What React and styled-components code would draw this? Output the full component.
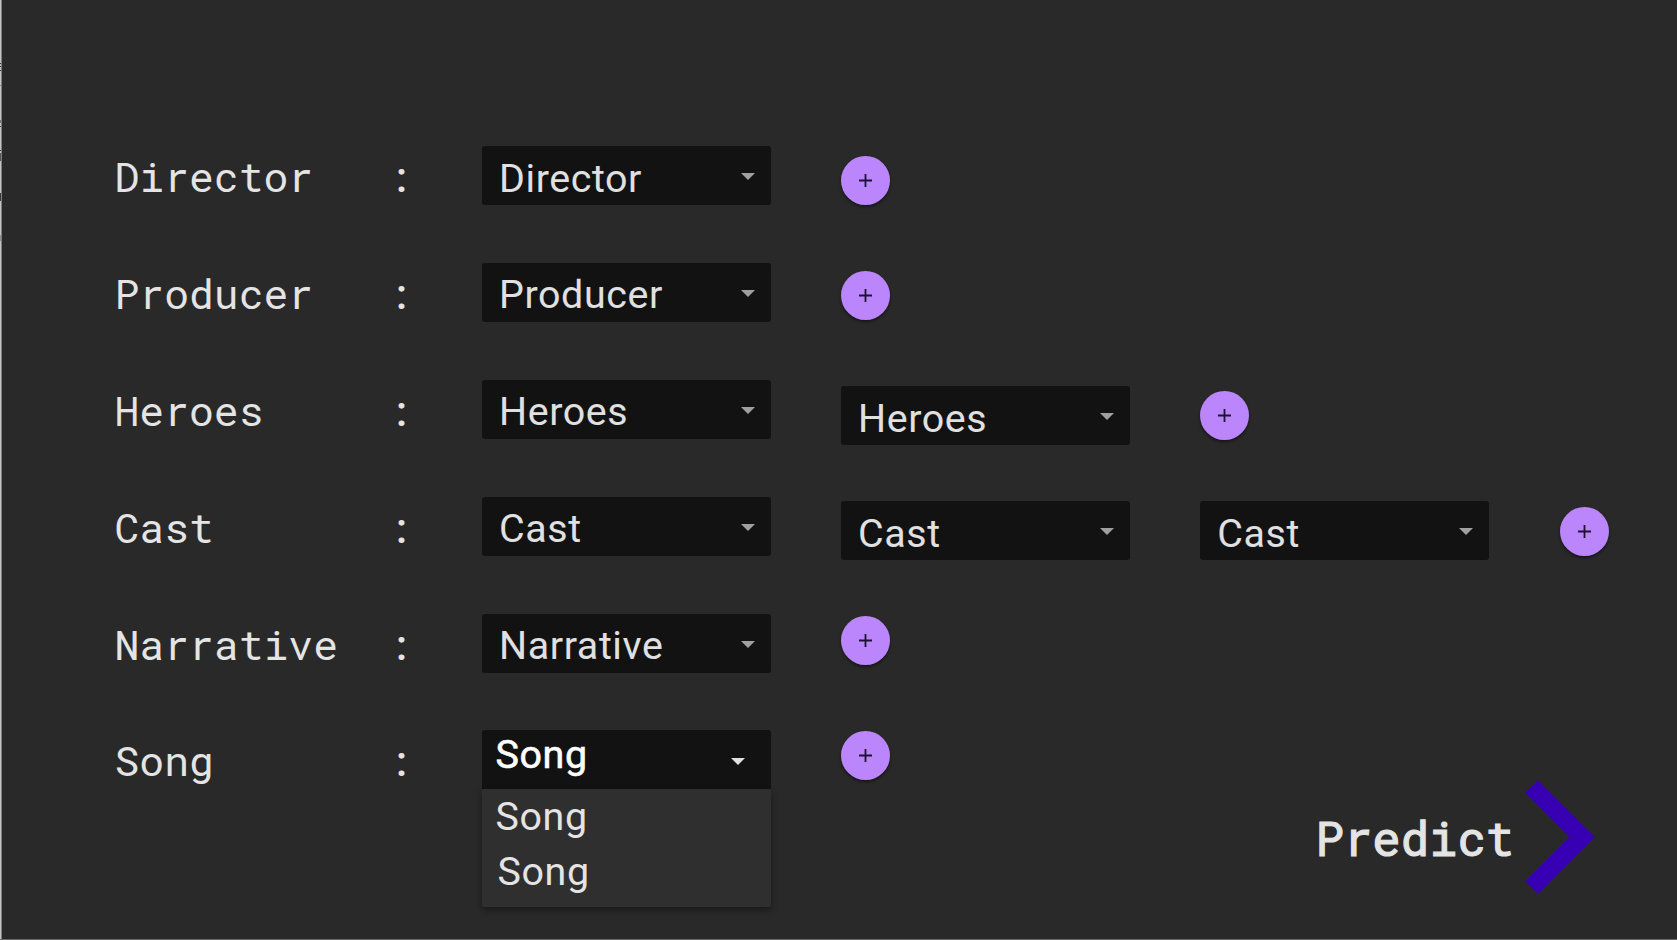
import React from "react";
import styled, { createGlobalStyle, css } from "styled-components";

const GlobalStyle = createGlobalStyle`
  *, *::before, *::after { box-sizing: border-box; }
  body { margin: 0; background: #292929; overflow: hidden; }
`;

const mono = css`font-family: "Roboto Mono", "DejaVu Sans Mono", monospace;`;

const Page = styled.main`
  width: 1677px;
  height: 940px;
  display: flex;
  background: #292929;
  border-bottom: 1px solid #6a6a6a;
  color: #e4e4e4;
`;

const Edge = styled.div`
  width: 2px;
  flex: none;
  border-right: 1px solid #808080;
  background: linear-gradient(
    #c4c4c4 63px, #333 63px 64px, #c4c4c4 64px 66px, #333 66px 67px,
    #c4c4c4 67px 70px, #333 70px 71px, #c4c4c4 71px 85px, #888 85px 86px,
    #c4c4c4 86px 120px, #777 120px 123px, #c4c4c4 123px 126px, #444 126px 127px,
    #c4c4c4 127px 150px, #333 150px 151px, #c4c4c4 151px 153px, #555 153px 161px,
    #c4c4c4 161px 193px, #383838 193px 201px, #c4c4c4 201px 235px,
    #909090 235px 241px, #c4c4c4 241px
  );
`;

const Form = styled.div`
  width: 726px;
  margin: 146px 0 0 112px;
  flex: none;
  display: flex;
  flex-direction: column;
  gap: 57.9px;
`;

const Field = styled.div`
  display: grid;
  grid-template-columns: 273px 95px 289px;
  height: 59px;
`;

const Label = styled.span`
  ${mono}
  font-size: 41.4px;
  line-height: 59px;
  padding: 1px 0 0 0.5px;
  white-space: pre;
`;

const SelectBox = styled.button`
  position: relative;
  display: flex;
  align-items: center;
  justify-content: space-between;
  width: 289px;
  flex: none;
  height: 59px;
  margin: 0;
  padding: ${(p) => (p.$open ? "0 26px 9px 13.5px" : "6px 16px 0 17px")};
  border: 0;
  border-radius: ${(p) => (p.$open ? "3px 3px 0 0" : "3px")};
  background: #121212;
  color: ${(p) => (p.$open ? "#ffffff" : "#e0e0e0")};
  font: 400 39.4px/48px Roboto, sans-serif;
  -webkit-text-stroke: ${(p) => (p.$open ? "0.6px #ffffff" : "0")};
  letter-spacing: 0.6px;
  text-align: left;
`;

const Arrow = styled.svg`
  width: 14px;
  height: 7px;
  margin-top: ${(p) => (p.$open ? "12px" : "-4px")};
  fill: ${(p) => (p.$open ? "#e0e0e0" : "#a0a0a0")};
`;

const Anchor = styled.div`
  position: relative;
`;

const Menu = styled.ul`
  position: absolute;
  top: 58.5px;
  left: 0;
  width: 289px;
  height: 118.5px;
  margin: 0;
  padding: 0 13.5px;
  list-style: none;
  border-radius: 2px;
  background: #2f2f2f;
  box-shadow: 0 3px 6px rgba(0, 0, 0, 0.4);
`;

const Option = styled.li`
  height: 55px;
  padding-left: ${(p) => p.$indent || 0}px;
  font: 400 39.4px/55px Roboto, sans-serif;
  letter-spacing: 0.6px;
`;

const Extras = styled.div`
  padding-top: 156px;
  margin-left: 1px;
  display: flex;
  flex-direction: column;
`;

const ExtraRow = styled.div`
  display: flex;
  align-items: flex-start;
  gap: 70.3px;
  height: 115.08px;
`;

const AddButton = styled.button`
  width: 49px;
  height: 49px;
  flex: none;
  margin: ${(p) => p.$drop}px 0 0;
  padding: 0;
  display: grid;
  place-items: center;
  border: 0;
  border-radius: 50%;
  background: #bb86fc;
  box-shadow: 0 2px 3px rgba(0, 0, 0, 0.45);
`;

const Predict = styled.button`
  position: absolute;
  left: 1315.5px;
  top: 778px;
  display: flex;
  align-items: center;
  gap: 10.5px;
  padding: 0;
  border: 0;
  background: none;
  color: #e4e4e4;
  ${mono}
  font-size: 47.3px;
  line-height: 118px;
  -webkit-text-stroke: 1.2px #e4e4e4;
`;

const PredictText = styled.span`
  padding-top: 1px;
`;

function Select({ text, open }) {
  return (
    <SelectBox $open={open}>
      {text}
      <Arrow $open={open} viewBox="0 0 14 7"><path d="M0 0h14L7 7z" /></Arrow>
    </SelectBox>
  );
}

function Add({ drop }) {
  return (
    <AddButton $drop={drop} aria-label="Add">
      <svg width="13" height="13" viewBox="0 0 13 13" stroke="#1f1230" strokeWidth="1.8">
        <path d="M6.5 0v13M0 6.5h13" />
      </svg>
    </AddButton>
  );
}

const fields = [
  { name: "Director", extra: 0, drop: 0 },
  { name: "Producer", extra: 0, drop: 0 },
  { name: "Heroes", extra: 1, drop: 5 },
  { name: "Cast", extra: 2, drop: 5.8 },
  { name: "Narrative", extra: 0, drop: 0 },
  { name: "Song", extra: 0, drop: 0, open: true },
];

export default function App() {
  return (
    <>
      <GlobalStyle />
      <Page>
        <Edge />
        <Form>
          {fields.map((f) => (
            <Field key={f.name}>
              <Label>{f.name}</Label>
              <Label>:</Label>
              <Anchor>
                <Select text={f.name} open={f.open} />
                {f.open && (
                  <Menu>
                    <Option>Song</Option>
                    <Option $indent={2}>Song</Option>
                  </Menu>
                )}
              </Anchor>
            </Field>
          ))}
        </Form>
        <Extras>
          {fields.map((f) => (
            <ExtraRow key={f.name}>
              {Array.from({ length: f.extra }, (_, i) => (
                <Select key={i} text={f.name} />
              ))}
              <Add drop={f.drop} />
            </ExtraRow>
          ))}
        </Extras>
        <Predict>
          <PredictText>Predict</PredictText>
          <svg width="70" height="115" viewBox="0 0 70 115" fill="none">
            <path d="M6.5 6.5L57 57L6.5 107.5" stroke="#3700b3" strokeWidth="18" />
          </svg>
        </Predict>
      </Page>
    </>
  );
}
